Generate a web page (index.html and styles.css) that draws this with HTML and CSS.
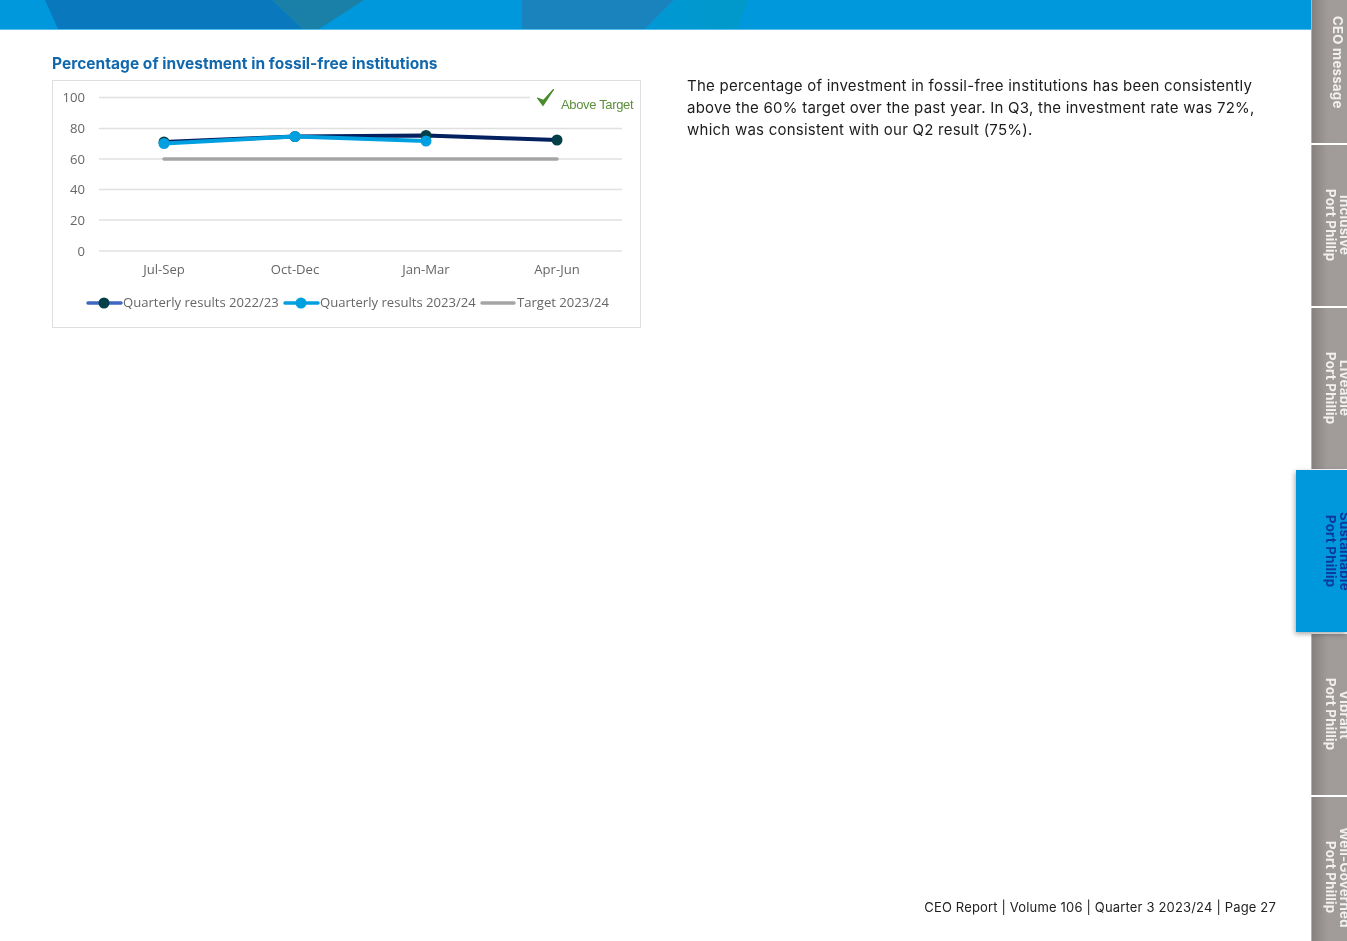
FILE: index.html
```html
<!DOCTYPE html>
<html lang="en">
<head>
<meta charset="utf-8">
<title>CEO Report</title>
<link rel="stylesheet" href="styles.css">
</head>
<body>
<div class="page">
  <main class="main">
    <header class="banner">
      <svg class="banner-art" viewBox="0 0 1311 29" preserveAspectRatio="none" aria-hidden="true">
        <defs>
          <linearGradient id="aqua" x1="0" x2="1" y1="0" y2="0">
            <stop offset="0" stop-color="#0098d6"/>
            <stop offset="1" stop-color="#0099c8"/>
          </linearGradient>
        </defs>
        <polygon class="shape-dark" points="45,0 272,0 303,29 58,29"/>
        <polygon class="shape-teal" points="272,0 364,0 319,29 303,29"/>
        <polygon class="shape-mid" points="522,0 674,0 645,29 522,29"/>
        <polygon fill="url(#aqua)" points="674,0 748,0 737,29 645,29"/>
      </svg>
    </header>
    <section class="content">
      <div class="chart-col">
        <h2 class="chart-title">Percentage of investment in fossil-free institutions</h2>
        <figure class="chart">
          <svg class="chart-svg" viewBox="53 81 587 246" role="img" aria-label="Line chart of percentage of investment in fossil-free institutions">
            <g class="grid">
              <line x1="99" y1="97.5" x2="530" y2="97.5"/>
              <line x1="99" y1="128.5" x2="622" y2="128.5"/>
              <line x1="99" y1="159" x2="622" y2="159"/>
              <line x1="99" y1="189.5" x2="622" y2="189.5"/>
              <line x1="99" y1="220" x2="622" y2="220"/>
              <line x1="99" y1="251" x2="622" y2="251"/>
            </g>
            <g class="axis-y">
              <text x="85" y="102">100</text>
              <text x="85" y="133">80</text>
              <text x="85" y="163.500">60</text>
              <text x="85" y="194">40</text>
              <text x="85" y="225">20</text>
              <text x="85" y="255.500">0</text>
            </g>
            <g class="axis-x">
              <text x="164" y="274">Jul-Sep</text>
              <text x="295" y="274">Oct-Dec</text>
              <text x="426" y="274">Jan-Mar</text>
              <text x="557" y="274">Apr-Jun</text>
            </g>
            <line class="line-target" x1="164" y1="159" x2="557" y2="159"/>
            <polyline class="line-a" points="164,142 295,136.500 426,135.500 557,140"/>
            <g class="dot-a">
              <circle cx="164" cy="142" r="5.500"/><circle cx="295" cy="136.500" r="5.500"/><circle cx="426" cy="135.500" r="5.500"/><circle cx="557" cy="140" r="5.500"/>
            </g>
            <polyline class="line-b" points="164,143.500 295,136.500 426,141"/>
            <g class="dot-b">
              <circle cx="164" cy="143.500" r="5.500"/><circle cx="295" cy="136.500" r="5.500"/><circle cx="426" cy="141" r="5.500"/>
            </g>
            <path class="tick" d="M537.500 98 L543 105.500 L553.500 89.500 L543.500 100.500 Z"/>
            <text class="above" x="561" y="108.500">Above Target</text>
            <g class="legend">
              <line class="legend-a" x1="88" y1="303" x2="121" y2="303"/>
              <circle class="legend-a-dot" cx="104" cy="303" r="5.500"/>
              <text x="123" y="307">Quarterly results 2022/23</text>
              <line class="legend-b" x1="285" y1="303" x2="318" y2="303"/>
              <circle class="legend-b-dot" cx="301" cy="303" r="5.500"/>
              <text x="320" y="307">Quarterly results 2023/24</text>
              <line class="legend-c" x1="482" y1="303" x2="514" y2="303"/>
              <text x="517" y="307">Target 2023/24</text>
            </g>
          </svg>
        </figure>
      </div>
      <p class="summary">The percentage of investment in fossil-free institutions has been consistently above the 60% target over the past year. In Q3, the investment rate was 72%, which was consistent with our Q2 result (75%).</p>
    </section>
    <footer class="foot">CEO Report | Volume 106 | Quarter 3 2023/24 | Page 27</footer>
  </main>
  <nav class="rail">
    <a class="tab"><span>CEO message</span></a>
    <a class="tab"><span>Inclusive<br>Port Phillip</span></a>
    <a class="tab"><span>Liveable<br>Port Phillip</span></a>
    <a class="tab tab-active"><span>Sustainable<br>Port Phillip</span></a>
    <a class="tab"><span>Vibrant<br>Port Phillip</span></a>
    <a class="tab"><span>Well-Governed<br>Port Phillip</span></a>
  </nav>
</div>
</body>
</html>
```
FILE: styles.css
```css
* { box-sizing: border-box; }
html, body { margin: 0; height: 100%; overflow: hidden; background: #fff; }
body { font-family: "Inter", "Noto Sans", sans-serif; color: #1c1c1c; }

.page { display: grid; grid-template-columns: 1fr 36px; height: 941px; overflow: hidden; }

.main { display: flex; flex-direction: column; min-width: 0; }

.banner { height: 30px; flex: none; background: #0098dc; border-bottom: 1px solid #55bdea; }
.banner-art { display: block; width: 100%; height: 29px; filter: blur(0.4px); }
.shape-dark { fill: #0a78bd; }
.shape-teal { fill: #1a80a8; }
.shape-mid { fill: #1a82bd; }

.content { display: flex; padding: 25px 0 0 52px; gap: 46px; align-items: flex-start; }

.chart-col { flex: none; width: 589px; }
.chart-title { margin: 0 0 7px; font-size: 15.500px; line-height: 18px; font-weight: 700; letter-spacing: 0.030px; color: #1268ad; filter: blur(0.3px); }
.chart { margin: 0; width: 589px; height: 248px; border: 1px solid #dedede; }
.chart-svg { display: block; width: 587px; height: 246px; overflow: visible; filter: blur(0.4px); }

.grid line { stroke: #e0e0e0; stroke-width: 1.500; }
.axis-y text, .axis-x text, .legend text { font-family: "Open Sans", sans-serif; font-size: 13.100px; fill: #666; }
.axis-y text { text-anchor: end; }
.axis-x text { text-anchor: middle; }

.line-target { stroke: #a5a5a5; stroke-width: 3.500; stroke-linecap: round; }
.line-a, .line-b { fill: none; stroke-width: 4; stroke-linecap: round; stroke-linejoin: round; }
.line-a { stroke: #03205f; }
.line-b { stroke: #00a0e0; }
.dot-a circle { fill: #053f48; }
.dot-b circle { fill: #00a0e0; }

.tick { fill: #4a8a2c; stroke: #4a8a2c; stroke-width: 1.200; stroke-linejoin: round; }
.above { font-family: "Liberation Sans", sans-serif; font-size: 13px; letter-spacing: -0.350px; fill: #5b8f3a; }

.legend-a, .legend-b, .legend-c { stroke-width: 3.500; stroke-linecap: round; }
.legend-a { stroke: #3f66c0; }
.legend-b { stroke: #00a0e0; }
.legend-c { stroke: #a5a5a5; }
.legend-a-dot { fill: #053f48; }
.legend-b-dot { fill: #00a0e0; }

.summary { flex: none; width: 590px; margin: 19.500px 0 0; font-size: 15px; line-height: 22px; letter-spacing: 0.240px; color: #1c1c1c; filter: blur(0.3px); }

.foot { margin-top: auto; padding: 0 71px 25px 0; text-align: right; font-size: 13px; line-height: 18px; letter-spacing: 0.170px; color: #222; padding-right: 35px; padding-bottom: 42px; filter: blur(0.3px); }

.rail { display: flex; flex-direction: column; gap: 2px; margin-top: -18px; min-width: 0; }
.tab {
  flex: none; display: flex; align-items: center; justify-content: center;
  height: 161px; padding-left: 18px; overflow: hidden;
  background: linear-gradient(to right, #85807e 0, #a09b99 45%, #a09c9a 100%);
  box-shadow: inset 1px 0 0 #b5b2b0;
  color: #f1f0ef; font-weight: 700; font-size: 13.300px; line-height: 14px; letter-spacing: 0.200px;
}
.tab span { flex: none; writing-mode: vertical-rl; text-align: center; white-space: nowrap; filter: blur(0.5px); }
.tab-active {
  position: relative; height: 162px; margin-top: -1px; margin-left: -15px; padding-left: 33px;
  background: #0098dc; color: #0b3a9b;
  box-shadow: -1px 2px 5px rgba(0, 0, 0, 0.35);
}
```
